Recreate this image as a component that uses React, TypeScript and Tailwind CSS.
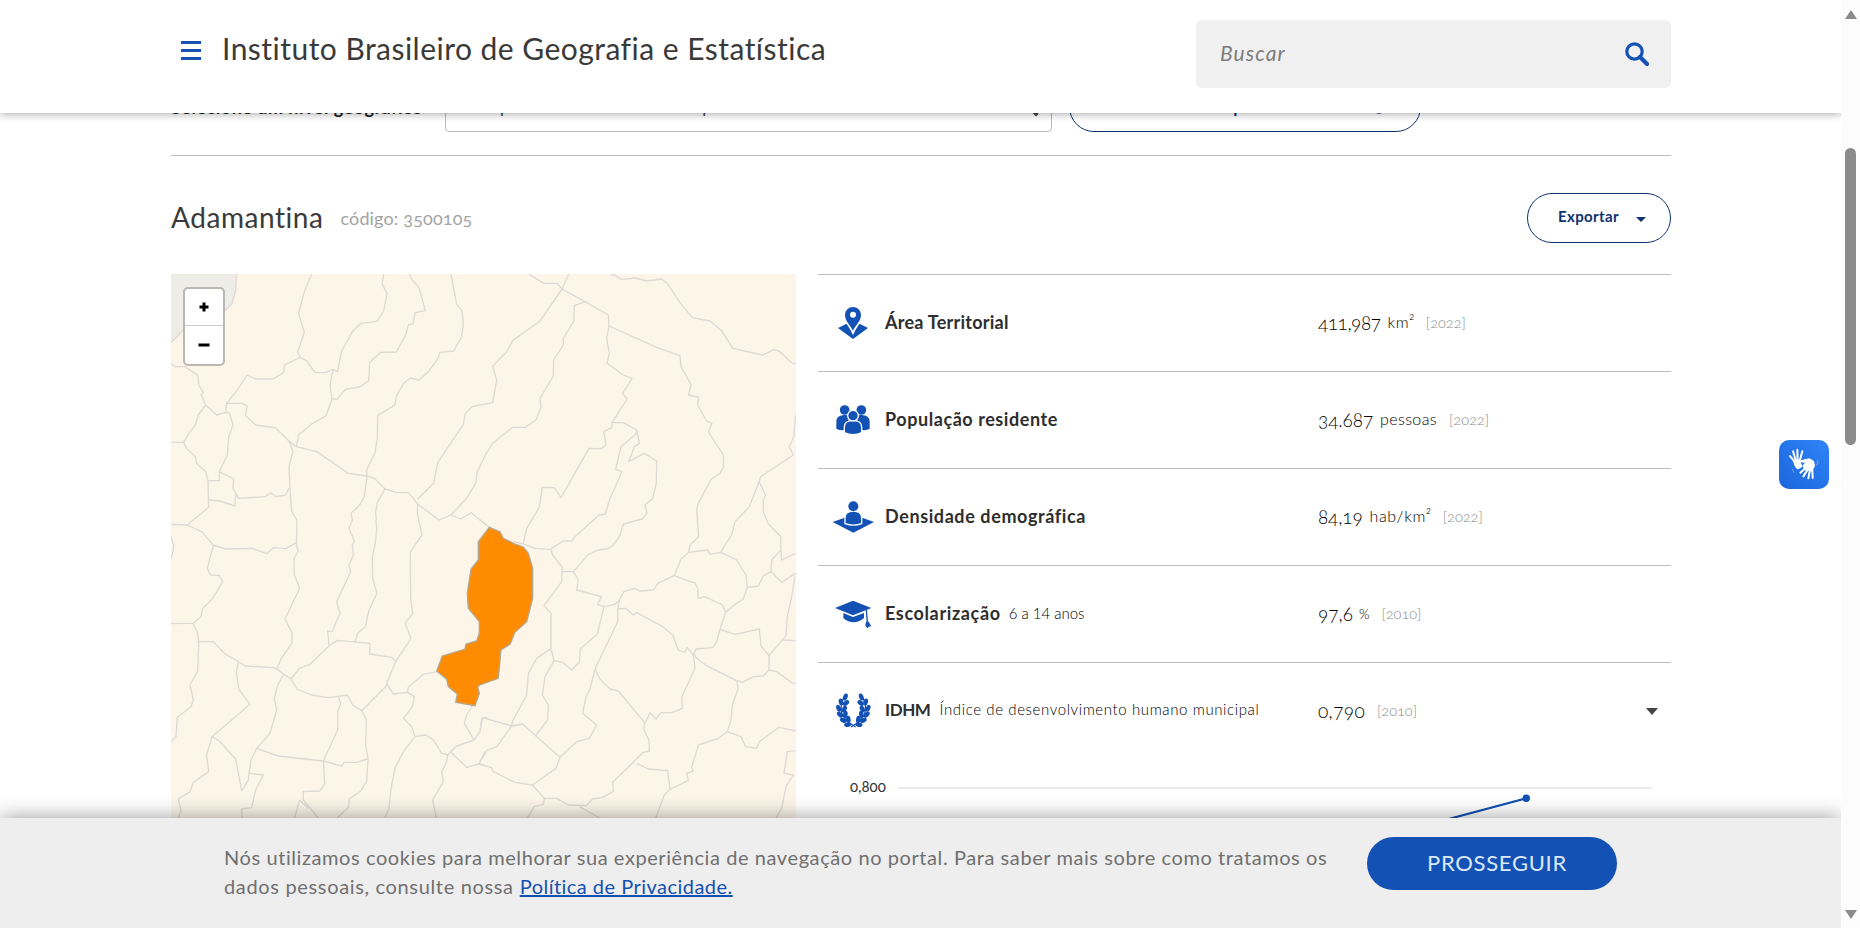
import type { ReactNode } from "react";

const BLUE = "#1351b4";

function T({ className = "", children }: { className?: string; children: ReactNode }) {
  return <span className={"inline-block whitespace-nowrap " + className}>{children}</span>;
}

const mapNW = [
  "M215 12L212 60L202 100L180 122L120 150L55 180L18 218",
  "M440 12L418 65L401 130L418 187L398 245L406 262L358 285L356 307L325 327L272 327L246 315L215 363L185 400L182 427L155 435L122 405L109 375L115 367L101 345L99 317L60 290L30 290L18 280",
  "M406 262L425 273L450 307L480 308L504 298L517 305L530 243L563 184L588 160L636 154L656 123L666 70L651 42L656 12",
  "M733 12L740 28L762 53L781 122L750 128L744 162L731 163L722 195L694 246L648 247L614 277L611 333L583 351L541 358L517 387L501 387L495 345L504 298",
  "M501 387L483 437L440 462L401 494L394 530",
  "M858 12L875 103L891 122L895 160L890 200L866 243L825 247L818 268L790 305L762 331L737 324L716 340L694 378L690 405L638 437L637 505L630 548L605 600L606 618",
  "M185 400L232 400L246 407L242 437L272 465L332 474L372 513L394 530L455 545L550 610L606 618L628 625L660 657L695 667L731 668L758 702L822 750L858 735L887 747L919 728L960 762",
  "M945 405L921 410L901 430L895 463L818 578L806 640L758 687",
  "M960 557L937 605L932 640L905 685L858 735",
  "M122 405L100 435L91 465L72 490L56 517L18 517",
  "M56 517L66 537L91 560L95 580L122 605L129 632L131 712L66 765L18 763",
  "M182 427L194 430L204 465L191 500L187 555L163 605L206 627L204 655L221 685L300 680L318 668L332 680L362 675L372 655",
  "M129 632L163 632L163 605M131 690L165 693L210 708L212 672",
  "M372 513L384 545L372 590L375 655L380 725L396 750L394 825",
  "M66 765L110 785L145 825",
  "M606 618L598 680L583 706L558 730L562 750L552 775L568 812L562 825",
  "M660 657L638 695L632 725L635 780L630 825",
  "M758 702L757 730L771 795L750 825",
  "M18 800L26 825",
];

const mapNE = [
  "M146 12L192 40L232 40L246 57L315 95L385 135L387 168L530 232L600 257L603 290L633 343L626 375L656 382L653 405L680 453L696 460L685 485L730 555L731 590L720 610L693 628L655 700L650 720L656 800L630 825",
  "M267 12L246 57L180 153L98 212L80 245L38 288L50 330L38 398L0 405",
  "M315 95L283 107L281 155L250 205L250 225L221 270L220 318L180 385L183 412L168 450L135 472L98 472L38 520L15 557",
  "M387 168L380 205L388 250L381 280L430 315L456 325L428 370L441 387L396 458L396 472L371 485L378 525L363 536L327 535L243 683L223 653L187 652L178 712L140 775L130 820",
  "M396 458L430 458L470 480L478 520L463 530L446 575L493 550L530 573L529 640L518 685L495 705L501 730L487 747L430 762L420 797L400 825",
  "M470 480L468 492L423 530L407 598L426 605L388 690L376 732L357 735L285 800L275 813L250 813L210 838L165 835L130 822L100 815",
  "M0 750L28 772",
  "M390 12L405 16L425 29L465 24L500 33L545 27L560 38L600 98L637 143L690 153L725 182L758 235L848 255L882 238L900 245L935 278L947 282",
  "M947 435L941 500L928 530L940 555L842 620L837 635L857 675L850 690L850 725L865 762L903 800L902 825",
  "M837 635L808 710L765 755L755 795L735 825",
];

const mapSW = [
  "M26 0L24 20L18 40",
  "M145 0L127 70L136 90L163 91L173 110L141 163L113 190L108 215L84 235L18 236",
  "M84 235L98 265L101 300L98 378L75 420L85 465L78 485L37 517L33 575L18 592",
  "M145 0L182 12L262 10L305 26L325 8L362 11L396 -8",
  "M394 0L400 18L387 40L388 90L404 130L360 222L382 265L380 295L348 342L335 373",
  "M101 290L145 290L178 325L242 363L328 368L378 402L396 432L440 450L489 458L547 450L563 480L590 497",
  "M378 402L403 370L435 358L492 303L517 286L615 295L614 327L680 337L692 350",
  "M562 0L565 30L552 60L557 80L515 170L525 205L501 260L488 258L492 303",
  "M630 0L622 35L623 100L636 145L612 195L601 245L578 265L570 292",
  "M750 0L736 22L737 160L743 205L720 235L738 280L692 350L665 415L662 425L590 497",
  "M665 415L685 447L727 442L748 455L742 485L715 520L740 545L750 575",
  "M727 442L730 427L775 388L815 380",
  "M220 353L214 380L221 432L255 478L141 575L160 585L212 642L230 738L250 705L252 685L295 690L272 735L260 788L230 792L232 830",
  "M252 685L258 645L275 610L315 565L335 495L328 460L338 420L355 390",
  "M275 610L340 633L475 648L530 663L538 652L575 652L607 642",
  "M520 455L527 475L518 500L518 555L475 648L479 715L465 738L415 740L415 765L465 825",
  "M404 765L387 825M404 765L430 790",
  "M590 497L604 525L602 600L609 642L605 710L585 740L552 762L552 785L510 825",
  "M750 575L715 620L690 670L678 730L672 790L655 830",
  "M750 575L782 570L805 585L830 625L848 630L875 603L927 585L898 535L905 510L922 483",
  "M927 585L945 560L950 520L966 517",
  "M848 630L845 650L830 680L835 710L803 765L815 825",
  "M858 622L905 667L942 657L960 662M942 657L960 620",
  "M141 575L125 630L131 680L85 712L75 740L40 762L48 795L38 825",
];

const mapSE = [
  "M213 14L218 30L247 68L245 110L192 182L213 205L213 310L222 347L250 353L275 375L298 352L301 312L352 267L372 185",
  "M247 80L280 80L325 28L355 15L385 10L400 0",
  "M280 80L295 105L290 135L365 155L353 178L372 185L405 178L418 165L432 140L463 130L480 138L520 135L533 115L583 92L603 42L626 22L683 15L690 28L722 22L770 45L798 90L802 127L790 162L760 182L737 202L727 180L675 155L655 160L653 130L645 113L625 108L583 92",
  "M626 22L630 0M722 22L735 0",
  "M802 127L835 123L850 92L873 80L905 112L947 85",
  "M873 80L875 45L903 15L903 0M903 15L905 45L947 25",
  "M418 165L413 195L413 230L345 372L330 432L318 455L308 505L350 540L328 580L290 590L240 637L228 670L157 720L105 712L40 680L35 668L0 658",
  "M413 192L437 190L460 210L470 203L545 243L578 270L595 315L613 322L622 308L640 330L645 370L605 457L607 490L575 503L543 503L528 522L510 503L495 535",
  "M640 330L648 312L698 308L710 290L720 253L737 202",
  "M720 253L765 268L838 252L843 303L867 332L867 375L850 393L820 395L787 412L770 407L680 362L650 340L640 325",
  "M867 332L918 272L922 215L935 155L945 95",
  "M905 285L947 287M867 375L890 380L935 412L947 417",
  "M770 407L775 430L757 480L753 525L742 560L715 580L655 600L635 667L640 678L620 685L625 707L570 733L563 677L505 672L470 655",
  "M742 560L783 575L797 605L830 610L838 590L897 547L947 558",
  "M345 372L360 403L390 432L415 438L493 532L492 555L507 585L508 618L490 622L398 712L400 740L365 758L338 762L318 782",
  "M570 733L553 750L525 825",
  "M213 310L170 340L145 385L140 450L97 530L95 543L8 518L0 557",
  "M222 347L195 395L187 450L205 480L203 525L167 572",
  "M95 543L128 537L167 572L240 637",
  "M95 543L50 605L20 617L0 650",
  "M157 720L193 760L230 760L265 780L318 782M298 785L370 825M193 760L190 778L163 785L138 825",
  "M947 617L922 620L912 685L940 690L918 725L905 790L885 825",
];

const sheets = [
  { at: "translate(-6 -4) scale(.33333)", d: mapNW },
  { at: "translate(309 -4) scale(.33333)", d: mapNE },
  { at: "translate(-6 271) scale(.33333)", d: mapSW },
  { at: "translate(309 271) scale(.33333)", d: mapSE },
];

function MunicipalityMap() {
  return (
    <div className="relative h-[640px] w-[625px] shrink-0 overflow-hidden bg-[#fcf5e8]">
      <svg width="625" height="640" viewBox="0 0 625 640" className="block">
        <path d="M0 0H66L65 16L61 30L54 37L13 56L0 69Z" fill="#edece7" />
        {sheets.map((s) => (
          <g key={s.at} transform={s.at} fill="none" stroke="#dedad3" strokeWidth="4" strokeLinejoin="round">
            {s.d.map((d) => (
              <path key={d} d={d} />
            ))}
          </g>
        ))}
        <path
          transform="translate(-171 -274)"
          d="M489.3 527.3L500 531.7L503.3 538.3L515 544L523.3 547L528.3 553.3L532.7 568.3V598.3L526.7 621.7L515 632.3L510 644.3L501 650L498.3 678.3L480 685L477.7 686.7L479.3 693.3L475 705.7L455.7 702.3L457.3 694L448.3 686.7L446.7 679.3L436.7 671L442.3 656L465 649L466 644L476.7 641L479.3 633.3V621.7L468.3 608.3L467.3 593.3L471 569L478.3 560V541.7Z"
          fill="#ff8c00"
          stroke="#b3a894"
          strokeWidth="1.3"
        />
      </svg>
      <div className="absolute top-[13px] left-[12px] flex w-[42px] flex-col rounded-[5px] border-2 border-[#b9b8b3] bg-white">
        <button className="flex h-[37px] items-center justify-center border-b border-[#ccc]">
          <svg width="10" height="10" viewBox="0 0 10 10"><path d="M5 .5V9.5M.5 5H9.5" stroke="#000" strokeWidth="3" /></svg>
        </button>
        <button className="flex h-[38px] items-center justify-center">
          <svg width="12" height="10" viewBox="0 0 12 10"><path d="M.5 5H11.5" stroke="#000" strokeWidth="3" /></svg>
        </button>
      </div>
    </div>
  );
}

function AreaIcon() {
  return (
    <svg width="42" height="42" viewBox="50 95 126 126" fill={BLUE}>
      <path d="M92 161L68 173L113 206L158 173L134 161Z" />
      <path d="M113 184C105 166 89 152 89 134a24 24 0 1 1 48 0C137 152 121 166 113 184Z" stroke="#fff" strokeWidth="9" />
      <path d="M113 181C105 165 89 152 89 134a24 24 0 1 1 48 0C137 152 121 165 113 181Z" />
      <circle cx="113" cy="133" r="9" fill="#fff" />
    </svg>
  );
}

function PeopleIcon() {
  return (
    <svg width="42" height="42" viewBox="50 386 126 126" fill={BLUE}>
      <circle cx="88" cy="419" r="14.5" />
      <circle cx="138" cy="419" r="14.5" />
      <path d="M63 475V454Q63 434 88 434Q106 434 112 446Q120 434 138 434Q163 434 163 454V475Q150 481 138 479H88Q74 481 63 475Z" />
      <g stroke="#fff" strokeWidth="4">
        <path d="M87 487V471Q87 450 113 450T139 471V487Q113 499 87 487Z" />
        <circle cx="113" cy="436" r="16" />
      </g>
    </svg>
  );
}

function DensityIcon() {
  return (
    <svg width="42" height="42" viewBox="50 676 126 126" fill={BLUE}>
      <path d="M52 754L92 740H136L176 754L114 786Z" />
      <path d="M89 759V742Q89 721 114 721T139 742V759Q114 768 89 759Z" stroke="#fff" strokeWidth="4" />
      <circle cx="114" cy="707" r="15" />
    </svg>
  );
}

function CapIcon() {
  return (
    <svg width="42" height="42" viewBox="50 142 126 126" fill={BLUE}>
      <path d="M59 187L113 165L168 187L113 209Z" />
      <path d="M84 202L113 214L146 202V217Q114 243 84 217Z" />
      <path d="M153 190L156 230" stroke={BLUE} strokeWidth="4" fill="none" />
      <path d="M152 228L160 228L168 242L160 243L156 248L150 240Z" />
    </svg>
  );
}

const leaves = [
  [90, 456, 20], [77, 471, -12], [92, 474, 50], [70, 490, -22], [87, 492, 30],
  [74, 509, -45], [90, 508, 10], [84, 526, -65], [99, 523, -10], [97, 539, -100],
];

function WreathIcon() {
  const half = leaves.map(([x, y, r]) => (
    <ellipse key={x + "-" + y} cx={x} cy={y} rx="6.8" ry="10.8" transform={`rotate(${r} ${x} ${y})`} />
  ));
  return (
    <svg width="42" height="42" viewBox="50 435 126 126" fill={BLUE}>
      {half}
      <path d="M84 460Q68 500 90 522Q102 536 121 546M144 460Q160 500 138 522Q126 536 107 546" fill="none" stroke={BLUE} strokeWidth="3.5" />
      <g transform="translate(228 0) scale(-1 1)">{half}</g>
    </svg>
  );
}

type Row = { icon: ReactNode; label: ReactNode; value: ReactNode; end?: ReactNode };

const labelCls = "text-[18px] font-bold text-[#2e2e2e]";
const noteCls = "-translate-y-px text-[15px] font-light text-black";
const numCls = "translate-y-px text-[19px] font-light text-black oldstyle-nums";
const unitCls = "ml-[7px] -translate-y-px text-[16px] font-light text-black";
const yearCls = "-translate-y-px text-[14.5px] font-light text-[#888] oldstyle-nums";

const rows: Row[] = [
  {
    icon: <AreaIcon />,
    label: <T className={labelCls + " tracking-[0.25px]"}>Área Territorial</T>,
    value: (<><T className={numCls + " tracking-[-0.46px]"}>411,987</T><T className={unitCls + " tracking-[0.5px]"}>km²</T><T className={yearCls + " ml-[11px]"}>[2022]</T></>),
  },
  {
    icon: <PeopleIcon />,
    label: <T className={labelCls + " tracking-[0.56px]"}>População residente</T>,
    value: (<><T className={numCls + " tracking-[-0.12px]"}>34.687</T><T className={unitCls + " tracking-[0.39px]"}>pessoas</T><T className={yearCls + " ml-[12px]"}>[2022]</T></>),
  },
  {
    icon: <DensityIcon />,
    label: <T className={labelCls + " tracking-[0.6px]"}>Densidade demográfica</T>,
    value: (<><T className={numCls + " tracking-[-0.14px]"}>84,19</T><T className={unitCls + " tracking-[0.6px]"}>hab/km²</T><T className={yearCls + " ml-[11px]"}>[2022]</T></>),
  },
  {
    icon: <CapIcon />,
    label: (<><T className={labelCls + " tracking-[0.63px]"}>Escolarização</T><T className={noteCls + " ml-2"}>6 a 14 anos</T></>),
    value: (<><T className={numCls}>97,6</T><T className="ml-[6px] -translate-y-px text-[13.5px] font-light text-black">%</T><T className={yearCls + " ml-[12px]"}>[2010]</T></>),
  },
  {
    icon: <WreathIcon />,
    label: (<><T className="text-[17px] font-bold tracking-[-0.4px] text-[#2e2e2e]">IDHM</T><T className={noteCls + " ml-[9px] tracking-[0.61px]"}>Índice de desenvolvimento humano municipal</T></>),
    value: (<><T className={numCls + " tracking-[0.36px]"}>0,790</T><T className={yearCls + " ml-[12px]"}>[2010]</T></>),
    end: <svg width="12" height="7" viewBox="0 0 12 7"><path d="M0 0H12L6 7Z" fill="#444" /></svg>,
  },
];

export default function App() {
  return (
    <div className="relative flex h-[928px] w-[1860px] overflow-hidden bg-white font-['Lato','Open_Sans',sans-serif]">
      <main className="h-[928px] w-[1841px] overflow-hidden pl-[171px]">
        <div className="flex h-[156px] w-[1500px] items-end border-b border-[#bdbdbd] pb-[23px]">
          <div className="flex h-[50px] w-full items-center">
            <div className="w-[274px]"><T className="text-[18px] font-bold tracking-[0.5px] text-[#222]">Selecione um nível geográfico</T></div>
            <div className="flex h-[50px] w-[607px] items-center justify-between rounded-[4px] border border-[#bbb] px-3 text-[17px] text-[#444]">
              <T className="-ml-[3px] tracking-[0.85px]">Um tipo de área territorial do país</T>
              <svg width="20" height="20" viewBox="0 0 24 24" fill="none" stroke="#444" strokeWidth="3.2">
                <circle cx="9.5" cy="9.5" r="7.7" />
                <path d="M15 15L22 22" strokeWidth="4.2" />
              </svg>
            </div>
            <div className="ml-[17px] flex h-[50px] w-[352px] items-center justify-center gap-[8px] rounded-full border border-[#0c326f] pl-[12px] text-[17px] font-bold text-[#0c326f]">
              <T className="tracking-[0.5px]">Ver dados comparados do local</T>
              <svg width="14" height="14" viewBox="0 0 16 16"><circle cx="8" cy="8" r="7" fill="none" stroke="#0c326f" strokeWidth="1.5" /></svg>
            </div>
          </div>
        </div>

        <div className="flex h-[118px] w-[1500px] items-center justify-between pt-[6px]">
          <div className="flex items-baseline pb-[2px]">
            <T className="text-[28px] tracking-[0.55px] text-[#3a3a3a]">Adamantina</T>
            <T className="ml-[17px] -translate-y-[3px] text-[18px] tracking-[0.16px] text-[#a3a3a3] oldstyle-nums">código: 3500105</T>
          </div>
          <button className="flex h-[50px] w-[144px] items-center gap-[17px] rounded-full border border-[#0c326f] pl-[30px] text-[#0c326f]">
            <T className="pb-[3px] text-[15px] font-bold tracking-[0.37px]">Exportar</T>
            <svg width="10" height="5" viewBox="0 0 10 5" className="mt-[2px]"><path d="M0 0H10L5 5Z" fill="#0c326f" /></svg>
          </button>
        </div>

        <div className="flex w-[1500px] justify-between">
          <MunicipalityMap />
          <div className="w-[853px]">
            {rows.map((r, i) => (
              <div key={i} className="flex h-[97px] items-center border-t border-[#bdbdbd] pl-[14px]">
                {r.icon}
                <div className="ml-[11px] flex w-[433px] items-baseline pb-[2px]">{r.label}</div>
                <div className="flex flex-1 items-baseline pb-[2px]">{r.value}</div>
                <div className="pr-[13px]">{r.end}</div>
              </div>
            ))}
            <div className="flex pl-[32px]">
              <div className="mt-[15px] w-[48px]"><T className="text-[15px] text-[#333] oldstyle-nums">0,800</T></div>
              <svg width="760" height="120" viewBox="898 759 760 120">
                <path d="M898.5 788H1651.5" stroke="#e0e0e0" strokeWidth="1.6" />
                <path d="M1370 840L1526.3 798.3" stroke={BLUE} strokeWidth="2" />
                <circle cx="1526.3" cy="798.3" r="3.7" fill={BLUE} />
              </svg>
            </div>
          </div>
        </div>
      </main>

      <header className="absolute top-0 left-0 flex h-[113px] w-[1841px] items-start bg-white pl-[181px] shadow-[0_1px_8px_rgba(0,0,0,0.35)]">
        <button className="mt-[41px] flex w-5 flex-col gap-[5px]">
          <span className="h-[3px] bg-[#1351b4]" />
          <span className="h-[3px] bg-[#1351b4]" />
          <span className="h-[3px] bg-[#1351b4]" />
        </button>
        <h1 className="mt-[26px] ml-[21px] w-[974px] text-[30px] text-[#3a3a3a]"><T className="tracking-[0.47px]">Instituto Brasileiro de Geografia e Estatística</T></h1>
        <div className="mt-5 flex h-[68px] w-[475px] items-center justify-between rounded-[6px] bg-[#f0f0f0] pr-[22px] pl-[24px]">
          <T className="pb-[2px] text-[21px] tracking-[1.1px] text-[#7c7c7c] italic">Buscar</T>
          <svg width="24" height="24" viewBox="0 0 24 24" fill="none" stroke={BLUE} strokeWidth="3.2">
            <circle cx="9.5" cy="9.5" r="7.7" />
            <path d="M15 15L22 22" strokeWidth="4.2" strokeLinecap="round" />
          </svg>
        </div>
      </header>

      <footer className="absolute bottom-0 left-0 flex h-[110px] w-[1841px] items-start bg-[#eee] pl-[224px] shadow-[0_0_20px_rgba(0,0,0,0.4)]">
        <div className="mt-[25px] w-[1143px] text-[20px] leading-[29px] text-[#707070]">
          <T className="tracking-[0.58px]">Nós utilizamos cookies para melhorar sua experiência de navegação no portal. Para saber mais sobre como tratamos os</T>
          <div className="flex">
            <T className="tracking-[0.66px]">dados pessoais, consulte nossa</T>
            <T className="ml-[6px] tracking-[0.47px] text-[#1351b4] underline">Política de Privacidade.</T>
          </div>
        </div>
        <button className="mt-[19px] flex h-[53px] w-[250px] items-center justify-center rounded-full bg-[#1351b4] pb-[2px] pl-[10px] text-[22px] text-[#dce8fa]"><T className="tracking-[0.7px]">PROSSEGUIR</T></button>
      </footer>

      <button className="absolute top-[440px] left-[1779px] flex h-[49px] w-[50px] items-center justify-center rounded-[10px] bg-gradient-to-tr from-[#1c66dc] to-[#2f83f7]">
        <svg width="50" height="50" viewBox="87 120 150 150" fill="none" stroke="#fff" strokeWidth="6" strokeLinecap="round">
          <path d="M136 188L120 168M138 184L129 154M143 182L142 149M149 183L157 154" />
          <path d="M131 185Q135 203 143 207L156 200L148 180L135 181Z" fill="#fff" strokeWidth="3" />
          <path d="M166 205L151 218M171 212L160 229M179 214L175 235M187 210L188 234" />
          <path d="M149 184L168 187L160 197L164 208L185 212L193 198L190 184L178 177L165 180Z" fill="#fff" strokeWidth="4" />
          <path d="M203 182V192L199 196M127 208L132 217" strokeWidth="2" strokeOpacity=".6" />
        </svg>
      </button>

      <aside className="relative z-10 flex h-[928px] w-[19px] flex-col items-center bg-[#fcfcfc] pt-[10px] pb-[9px]">
        <svg width="12" height="9" viewBox="0 0 12 9"><path d="M6 0L12 9H0Z" fill="#8b8b8b" /></svg>
        <div className="mt-[129px] h-[297px] w-[11px] rounded-full bg-[#8b8b8b]" />
        <svg width="12" height="9" viewBox="0 0 12 9" className="mt-auto"><path d="M6 9L0 0H12Z" fill="#8b8b8b" /></svg>
      </aside>
    </div>
  );
}
